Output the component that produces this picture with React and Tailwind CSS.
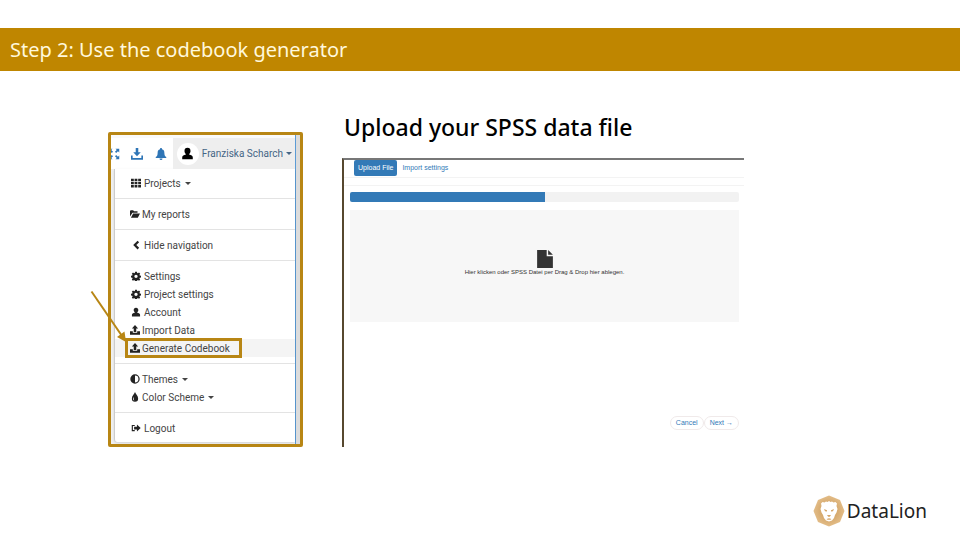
import React from "react";

const ICONS = {
  grid: (
    <path d="M0 1h4.500v3.800H0zM5.700 1h4.500v3.800H5.700zM11.500 1H16v3.800h-4.500zM0 6.100h4.500v3.800H0zM5.700 6.100h4.500v3.800H5.700zM11.500 6.100H16v3.800h-4.500zM0 11.200h4.500V15H0zM5.700 11.200h4.500V15H5.700zM11.500 11.200H16V15h-4.500z" />
  ),
  folder: <path d="M0 12V3l1-1h4l1.500 1.500H12V6H4zM1.500 14 5 7h11l-3.500 7z" />,
  chevron: <path d="M10.500 1 13 3.500 8.500 8 13 12.500 10.500 15 3.500 8z" />,
  gear: (
    <path
      fillRule="evenodd"
      d="M6.500 1h3l.4 2 1.200.500L12.800 2.300l1.900 1.900-1.200 1.700.500 1.200 2 .4v3l-2 .4-.5 1.200 1.200 1.700-1.900 1.900-1.700-1.200-1.200.500-.4 1h-3l-.4-1-1.200-.500-1.700 1.200-1.900-1.900 1.200-1.700-.5-1.200-2-.4v-3l2-.4.500-1.200-1.200-1.700 1.900-1.900 1.700 1.200 1.200-.5zM8 5.800a2.700 2.700 0 1 0 0 5.400 2.700 2.700 0 0 0 0-5.400z"
    />
  ),
  user: (
    <path d="M8 1C5.500 1 4.300 2.600 4.300 4.800c0 1.500.700 2.900 1.700 3.700v.7C3.500 9.800 1.500 10.700 1.500 12.500V15h13v-2.500c0-1.800-2-2.700-4.500-3.300v-.7c1-.8 1.700-2.200 1.700-3.700C11.700 2.600 10.500 1 8 1z" />
  ),
  upload: <path d="M8 0l5 5.500H10V11H6V5.500H3zM0 10h4.500v2.500h7V10H16v5.500H0z" />,
  download: <path d="M6.300 0h3.400v5.500h3.300L8 11 3 5.500h3.300zM0 10h2.200v3.200h11.600V10H16v5.700H0z" />,
  bell: <path d="M8 0a1.300 1.300 0 0 0-1.300 1.600C4.300 2.200 3.500 4 3.500 6.500c0 3-1 4.500-2.500 5.500v1.300h14V12c-1.500-1-2.500-2.500-2.500-5.500 0-2.500-.8-4.300-3.200-4.900A1.300 1.300 0 0 0 8 0zM6 14h4a2 2 0 0 1-4 0z" />,
  expand: (
    <path d="M10 1h5v5l-1.700-1.700-2.400 2.400-1.600-1.600 2.400-2.400zM6 15H1v-5l1.700 1.700 2.400-2.400 1.600 1.600-2.400 2.400zM1 1h5L4.300 2.700l2.400 2.400-1.600 1.600-2.400-2.400L1 6zM15 15h-5l1.700-1.700-2.400-2.400 1.600-1.600 2.400 2.400L15 10z" />
  ),
  contrast: (
    <path fillRule="evenodd" d="M8 .5a7.500 7.500 0 1 0 0 15 7.500 7.500 0 0 0 0-15zM8 2.500v11a5.500 5.500 0 0 0 0-11z" />
  ),
  drop: (
    <path fillRule="evenodd" d="M8 0c1 3 5 6 5 10.300A5 5 0 0 1 8 15.500a5 5 0 0 1-5-5.200C3 6 7 3 8 0zM6 8c-1 1.200-1.500 2.500-1 4 .4 1 1.200 1.500 2 1.700C5.800 12 5.700 10 6 8z" />
  ),
  logout: <path d="M6 3v1.800H3v6.400h3V13H1.200V3zM9.500 2.500 15.500 8l-6 5.500v-3.300H5V5.800h4.500z" />,
  file: <path d="M1 0h8.500v5.500H15V16H1zM10.800 0 15 4.300h-4.200z" />,
};

function Icon({ name, className }) {
  return (
    <svg viewBox="0 0 16 16" fill="currentColor" aria-hidden="true" className={className}>
      {ICONS[name]}
    </svg>
  );
}

function Caret() {
  return (
    <svg viewBox="0 0 6 3" fill="currentColor" aria-hidden="true" className="h-[3px] w-[6px]">
      <path d="M0 0h6L3 3z" />
    </svg>
  );
}

const MENU = [
  [{ icon: "grid", label: "Projects", caret: true, wide: true }],
  [{ icon: "folder", label: "My reports" }],
  [{ icon: "chevron", label: "Hide navigation", wide: true }],
  [
    { icon: "gear", label: "Settings", wide: true },
    { icon: "gear", label: "Project settings", wide: true },
    { icon: "user", label: "Account", wide: true },
    { icon: "upload", label: "Import Data" },
    { icon: "upload", label: "Generate Codebook", active: true },
  ],
  [
    { icon: "contrast", label: "Themes", caret: true },
    { icon: "drop", label: "Color Scheme", caret: true },
  ],
  [{ icon: "logout", label: "Logout", wide: true }],
];

function MenuItem({ item }) {
  return (
    <li className="relative">
      <button
        type="button"
        className={
          "flex h-[18px] w-full items-center pl-[15px] text-left text-[#444] " +
          (item.active ? "bg-[#f4f4f4]" : "")
        }
      >
        <Icon
          name={item.icon}
          className={"h-[10px] shrink-0 text-[#222] " + (item.wide ? "mr-[2px] w-[12px]" : "mr-[2px] w-[10px]")}
        />
        <span className="mr-1">{item.label}</span>
        {item.caret && <Caret />}
      </button>
      {item.active && (
        <span className="pointer-events-none absolute -top-px left-[10px] h-[20px] w-[117px] border-3 border-[#b88614]" />
      )}
    </li>
  );
}

function AccountMenu() {
  return (
    <section className="relative mt-[61px] w-[195px] shrink-0 rounded-[2px] border-3 border-[#b88614] font-[Roboto,sans-serif] text-[10px]">
      <div className="flex bg-[#f1f1f1]">
        <div className="min-w-0 flex-1 border-r border-[#5b9bd5]">
          <div className="flex h-[34px] items-stretch border-t-3 border-[#fafafa] bg-white text-[#2e75b6]">
            <div className="flex flex-1 items-center justify-between pr-[6px]">
              <button type="button" aria-label="Full screen" className="w-[9px] overflow-hidden">
                <Icon name="expand" className="-ml-[3px] h-[12px] w-[12px]" />
              </button>
              <button type="button" aria-label="Download">
                <Icon name="download" className="h-[12px] w-[12px]" />
              </button>
              <button type="button" aria-label="Notifications">
                <Icon name="bell" className="h-[12px] w-[12px]" />
              </button>
            </div>
            <button type="button" className="flex items-center gap-[3px] bg-[#eee] pr-[3px] pl-1 text-[#456585]">
              <span className="flex h-[22px] w-[22px] items-center justify-center rounded-full bg-white text-black">
                <Icon name="user" className="h-[13px] w-[13px]" />
              </span>
              Franziska Scharch
              <Caret />
            </button>
          </div>
          <nav className="mb-[2px] ml-[3px] rounded-bl-[3px] border-l border-[#ccc] bg-white py-[5px] shadow-sm">
            {MENU.map((group, i) => (
              <ul key={i} className={i > 0 ? "mt-[6px] border-t border-[#e3e3e3] pt-[6px]" : ""}>
                {group.map((item) => (
                  <MenuItem key={item.label} item={item} />
                ))}
              </ul>
            ))}
          </nav>
        </div>
        <div className="w-1 bg-[#dcdcdc]" />
      </div>
      <svg viewBox="0 0 40 56" aria-hidden="true" className="pointer-events-none absolute top-[154px] -left-[22px] h-[56px] w-[40px]">
        <path d="M2.500 2.500 33 47" stroke="#b88614" strokeWidth="2" fill="none" />
        <path d="M37 53 28 48l7.500-5.500z" fill="#b88614" />
      </svg>
    </section>
  );
}

function UploadPanel() {
  return (
    <section className="mt-[37px] max-w-[402px] min-w-0 flex-1">
      <h2 className="h-[50px] pl-[2px] font-['Noto_Sans',sans-serif] text-[23px] leading-[38px] font-medium whitespace-nowrap text-black">
        Upload your SPSS data file
      </h2>
      <div className="border-t-2 border-l-2 border-t-[#777] border-l-[#57482f] bg-white font-['Liberation_Sans',sans-serif] text-[7px] text-[#337ab7]">
        <div className="flex h-[18px] items-start border-b border-[#f3f3f3] pl-[10px]">
          <button type="button" className="h-[16px] rounded-[2px] bg-[#337ab7] px-1 text-white">
            Upload File
          </button>
          <button type="button" className="h-[16px] px-[5px]">
            Import settings
          </button>
        </div>
        <div className="h-2 border-b border-[#f3f3f3]" />
        <div className="pt-[6px] pr-[5px] pb-[17px] pl-[6px]">
          <div
            role="progressbar"
            aria-label="Import progress"
            aria-valuenow={50}
            className="h-[10px] overflow-hidden rounded-[2px] bg-[#f2f2f2]"
          >
            <div className="h-full w-1/2 bg-[#337ab7]" />
          </div>
          <button
            type="button"
            className="mt-2 flex h-[112px] w-full flex-col items-center bg-[#f7f7f7] pt-[40px] text-[6px] leading-[9px] text-[#333]"
          >
            <Icon name="file" className="h-[18px] w-[18px] shrink-0" />
            Hier klicken oder SPSS Datei per Drag &amp; Drop hier ablegen.
          </button>
          <div className="mt-[94px] flex justify-end">
            <button type="button" className="h-[14px] rounded-full border border-[#f0eaea] px-[5px] leading-[12px]">
              Cancel
            </button>
            <button type="button" className="h-[14px] rounded-full border border-[#f0eaea] px-[5px] leading-[12px]">
              Next →
            </button>
          </div>
        </div>
      </div>
    </section>
  );
}

function Logo() {
  return (
    <div className="flex items-center gap-[2px]">
      <svg viewBox="0 0 32 32" aria-hidden="true" className="h-[32px] w-[32px]">
        <defs>
          <radialGradient id="gold">
            <stop offset="0.4" stopColor="#d3a568" />
            <stop offset="1" stopColor="#e3bd88" />
          </radialGradient>
        </defs>
        <path d="M16 .5 27 5l4.500 11L27 27l-11 4.500L5 27 .5 16 5 5z" fill="url(#gold)" />
        <path
          fill="#fff"
          d="M8 8.500 9.500 7l2 .5L13 6.500l1.500.5L16 6l1.500 1 1.500-.5 1.500 1 2-.5L24 8.500l-.500 2.500 1 3-1 3.500-1.500 2.500-1 3-2 2.500-3 1-3-1-2-2.500-1-3-1.500-2.500-1-3.500 1-3z"
        />
        <path
          fill="#d3a568"
          d="m11 14 3 1.200v1.300l-2-.3zM21 14l-3 1.200v1.300l2-.3zM14 20h4l-1.200 1.800h-1.600zM13.500 24l2.500-.8 2.500.8-1 .8h-3z"
        />
      </svg>
      <span className="font-['Noto_Sans',sans-serif] text-[19px] leading-[32px] text-[#222]">DataLion</span>
    </div>
  );
}

export default function App() {
  return (
    <div className="flex min-h-screen flex-col bg-white pt-7">
      <header className="bg-[#bf8600] px-[10px]">
        <h1 className="font-['Noto_Sans',sans-serif] text-[20px] leading-[43px] text-[#fff8dc]">
          Step 2: Use the codebook generator
        </h1>
      </header>
      <main className="flex items-start gap-[39px] px-[108px]">
        <AccountMenu />
        <UploadPanel />
      </main>
      <footer className="mt-auto flex justify-end pr-[33px] pb-[13px]">
        <Logo />
      </footer>
    </div>
  );
}
